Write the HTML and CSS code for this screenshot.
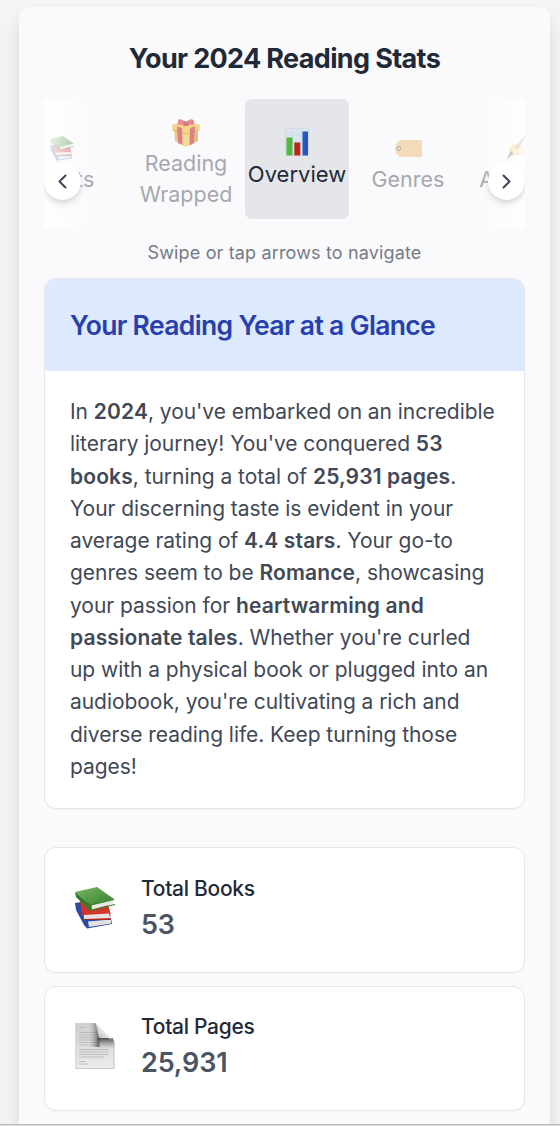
FILE: index.html
```html
<!DOCTYPE html>
<html lang="en">
<head>
<meta charset="UTF-8">
<title>Your 2024 Reading Stats</title>
<link rel="stylesheet" href="styles.css">
</head>
<body>
<svg class="defs" width="0" height="0">
	<defs>
		<linearGradient id="gGreen" x1="0" y1="0" x2="1" y2="1"><stop offset="0" stop-color="#79b565"/><stop offset="1" stop-color="#37812d"/></linearGradient>
		<linearGradient id="gGold" x1="0" y1="0" x2="1" y2="0"><stop offset="0" stop-color="#e0a52b"/><stop offset=".5" stop-color="#f4ce52"/><stop offset="1" stop-color="#cc972b"/></linearGradient>
		<linearGradient id="gPaper" x1="0" y1="0" x2="0" y2="1"><stop offset="0" stop-color="#cfcfcf"/><stop offset="1" stop-color="#ececec"/></linearGradient>
		<linearGradient id="gFold" x1="1" y1="0" x2="0" y2="1"><stop offset=".45" stop-color="#f4f4f4"/><stop offset=".7" stop-color="#cdcdcd"/><stop offset="1" stop-color="#666"/></linearGradient>
		<linearGradient id="gShade" x1="0" y1="0" x2="0" y2="1"><stop offset="0" stop-color="#444" stop-opacity=".95"/><stop offset="1" stop-color="#999" stop-opacity="0"/></linearGradient>
		<linearGradient id="gShade2" x1="1" y1="0" x2="0" y2="0"><stop offset="0" stop-color="#444" stop-opacity=".85"/><stop offset="1" stop-color="#999" stop-opacity="0"/></linearGradient>
		<symbol id="books" viewBox="0 0 40 42">
			<path d="M0 16 L6 15 L14 32 L36 31 L37 37 L12 41.500 L9 38 L1 23Z" fill="#2d48a5"/>
			<path d="M13 34.500 L36 32.500 L36 36.500 L14 40Z" fill="#e4e3e2"/>
			<path d="M5 14 L7 27 L9 32.500 L35 32 L35.500 26 L33 18Z" fill="#d2352a"/>
			<path d="M9 28 L34 26.500 L35 31 L9 32Z" fill="#e6e3e0"/>
			<path d="M8 32.500 H35.500" stroke="#a42820" stroke-width="1"/>
			<path d="M0 5 L22 0 L39 12 L16 18Z" fill="url(#gGreen)"/>
			<path d="M0 5 L16 18 L17 24 L13 22 L1 10Z" fill="#347c2b"/>
			<path d="M16.500 18 L38 12.500 L38 17 L17 22.500Z" fill="#e8e9e3"/>
			<path d="M16 18 L39 12.300 M16.500 23.300 L40 17.500" stroke="#377f2c" stroke-width="1.200"/>
		</symbol>
		<symbol id="gift" viewBox="0 0 28 28">
			<path d="M2 8 L14 12 L26 8 L26 22 L14 28 L3 22Z" fill="url(#gGold)"/>
			<path d="M0 6 L13 2 L28 6 L27.500 11 L14 15 L.5 11Z" fill="#efbd3e"/>
			<path d="M.5 11 L14 15 L27.500 11" fill="none" stroke="#b98525" stroke-width=".8"/>
			<path d="M5 7.500 L10 9 L10.500 26 L6 24Z M18 9 L23 7.500 L22 24 L17.500 26.500Z" fill="#ca303c"/>
			<path d="M14 4 C11 0 6 -1 6 2.500 C4 7 11 6 14 5 C17 6 24 7 22 2.500 C21 -1 17 0 14 4Z" fill="#df3f50"/>
			<path d="M12 2.500 L16 2.500 L17 7 L11 7Z" fill="#b82636"/>
		</symbol>
		<symbol id="chart" viewBox="0 0 24 28">
			<path d="M.5.500H23.500V27.500H.5Z" fill="#dde6f0" stroke="#d5dae1"/>
			<path d="M1 7H23M1 14H23M1 21H23M8 1V27M16 1V27" stroke="#cddae5" stroke-width=".6"/>
			<path d="M1.500 9.500h6v18h-6z" fill="#50b83c"/>
			<path d="M9.300 14.500h6v13h-6z" fill="#b9251f"/>
			<path d="M17.500 3.500h5.500v24h-5.500z" fill="#2558be"/>
		</symbol>
		<symbol id="tag" viewBox="0 0 27 17">
			<path d="M5 0H27V17H5L1 13Q-.5 8.500 1 4Z" fill="#f0c68c"/>
			<circle cx="3.800" cy="8.500" r="1.700" fill="#fff" stroke="#665746" stroke-width="1"/>
		</symbol>
		<symbol id="pen" viewBox="0 0 27 27">
			<path d="M2 14 Q7 7 13 9 L26 15 Q25 23 14 21 L3 22Z" fill="#f3bb3a"/>
			<path d="M0 26 L4 17 L8 18 Z" fill="#222"/>
			<path d="M7 15 L18 1 L20 0 L18 5 L10 17Z" fill="#555"/>
			<path d="M6 15 Q11 12 15 17 L11 20 L6 19Z" fill="#f7cd62"/>
		</symbol>
		<symbol id="page" viewBox="0 0 39 46">
			<path d="M0 0H20L39 19V46H0Z" fill="url(#gPaper)"/>
			<path d="M3.500 4.500h6M3.500 9.500h17M3.500 12h18M3.500 14.500h17M3.500 17h19M3.500 19.500h18M3.500 22h20M3.500 26.500h30M3.500 29h29M3.500 31.500h30M3.500 34h25M3.500 38.500h7M3.500 41h9" stroke="#b4b4b4" stroke-width=".8"/>
			<path d="M14 0H20L24 16V24H14Z" fill="url(#gShade2)"/>
			<path d="M22 15H37L39 19V26H22Z" fill="url(#gShade)"/>
			<path d="M20 0L39 19Q34 13 24 15Q25 5 20 0Z" fill="url(#gFold)"/>
			<path d="M.5 0V45.500H38.500V19" fill="none" stroke="#c4c4c4" stroke-width=".8"/>
		</symbol>
	</defs>
</svg>
<div class="panel">
	<h1>Your 2024 Reading Stats</h1>
	<div class="carousel">
		<div class="track">
			<div class="tab first"><span class="icon"><svg width="24" height="25"><use href="#books"/></svg></span><span>Habits</span></div>
			<div class="tab"><span class="icon"><svg width="28" height="28"><use href="#gift"/></svg></span><span>Reading</span><span>Wrapped</span></div>
			<div class="tab active"><span class="icon"><svg width="24" height="28"><use href="#chart"/></svg></span><span>Overview</span></div>
			<div class="tab"><span class="icon"><svg width="27" height="17"><use href="#tag"/></svg></span><span>Genres</span></div>
			<div class="tab"><span class="icon"><svg width="25" height="26"><use href="#pen"/></svg></span><span>Authors</span></div>
		</div>
		<div class="fade left"></div>
		<div class="fade right"></div>
		<button type="button" class="arrow prev"><svg width="9" height="15" viewBox="0 0 9 15"><path d="M7.500 1.500L1.500 7.500L7.500 13.500"/></svg></button>
		<button type="button" class="arrow next"><svg width="9" height="15" viewBox="0 0 9 15"><path d="M1.500 1.500L7.500 7.500L1.500 13.500"/></svg></button>
	</div>
	<p class="hint">Swipe or tap arrows to navigate</p>
	<div class="card">
		<h2>Your Reading Year at a Glance</h2>
		<p class="story">In <b>2024</b>, you've embarked on an incredible<br>
		literary journey! You've conquered <b>53<br>
		books</b>, turning a total of <b>25,931 pages</b>.<br>
		Your discerning taste is evident in your<br>
		average rating of <b>4.4 stars</b>. Your go-to<br>
		genres seem to be <b>Romance</b>, showcasing<br>
		your passion for <b>heartwarming and<br>
		passionate tales</b>. Whether you're curled<br>
		up with a physical book or plugged into an<br>
		audiobook, you're cultivating a rich and<br>
		diverse reading life. Keep turning those<br>
		pages!</p>
	</div>
	<div class="stats">
		<div class="stat">
			<svg width="40" height="42"><use href="#books"/></svg>
			<div><h3>Total Books</h3><p>53</p></div>
		</div>
		<div class="stat">
			<svg width="40" height="46"><use href="#page"/></svg>
			<div><h3>Total Pages</h3><p>25,931</p></div>
		</div>
		<div class="stat"></div>
	</div>
</div>
<div class="toolbar"></div>
</body>
</html>
```
FILE: styles.css
```css
* {margin:0; padding:0; box-sizing:border-box;}
html {height:100%; overflow:hidden;}
body {height:1126px; overflow:hidden; padding:7px 10px 0 19px; background:#f4f4f5; font-family:Inter, "Liberation Sans", sans-serif; color:#1f2937; position:relative;}
.defs {display:block; position:absolute;}

.panel {width:531px; height:1119px; overflow:hidden; padding:0 25px; background:#fafafc; border-radius:11px 11px 0 0; box-shadow:0 13px 20px rgba(0,0,0,.09), 0 5px 8px rgba(0,0,0,.03);}
h1 {height:92px; padding-top:34px; line-height:36px; font-size:27px; font-weight:650; letter-spacing:-.65px; text-align:center; white-space:nowrap;}

.carousel {height:129px; position:relative; overflow:hidden;}
.track {display:flex; gap:7px; height:129px; margin-left:-34px; width:600px;}
.tab {flex:none; width:104px; display:flex; flex-direction:column; align-items:center; justify-content:center; font-size:21.5px; line-height:31px; white-space:nowrap; color:#a6a8af;}
.tab.first {margin-right:13px;}
.tab .icon {height:31px; display:flex; align-items:center; justify-content:center; opacity:.6;}
.tab.active {height:120px; background:#e5e6ea; border-radius:7px; color:#1f2937; font-size:22px;}
.tab.active .icon {padding-bottom:3px; opacity:1;}
.fade {position:absolute; top:0; width:46px; height:129px;}
.fade.left {left:0; background:linear-gradient(to right, rgba(255,255,255,.85), rgba(255,255,255,0));}
.fade.right {right:0; background:linear-gradient(to left, rgba(255,255,255,.85), rgba(255,255,255,0));}
.arrow {position:absolute; top:64px; width:37px; height:37px; display:flex; align-items:center; justify-content:center; border:0; border-radius:50%; background:#fff; box-shadow:0 4px 7px rgba(0,0,0,.11), 0 2px 3px rgba(0,0,0,.05);}
.arrow.prev {left:0;}
.arrow.next {right:0;}
.arrow path {fill:none; stroke:#404754; stroke-width:2; stroke-linecap:round; stroke-linejoin:round;}

.hint {height:50px; padding-top:11px; line-height:28px; font-size:18px; letter-spacing:.15px; text-align:center; color:#747a86; white-space:nowrap;}

.card {height:531px; border:1.500px solid #e5e7ea; border-radius:12px; background:#fff; overflow:hidden; box-shadow:0 1px 1px rgba(0,0,0,.03);}
h2 {height:92px; padding-left:25px; line-height:92px; background:#dde9fd; color:#2740ac; font-size:26.5px; font-weight:600; letter-spacing:-.65px; white-space:nowrap;}
.story {padding:25px 0 0 25px; line-height:32.27px; font-size:21px; letter-spacing:-.05px; color:#414856; white-space:nowrap;}
.story b {font-weight:600; letter-spacing:.13px;}

.stats {display:flex; flex-direction:column; gap:13px; margin-top:38px;}
.stat {flex:none; height:125.500px; display:flex; align-items:center; gap:26px; padding:0 0 2px 30px; border:1.500px solid #e5e7ea; border-radius:12px; background:#fff; box-shadow:0 1px 1px rgba(0,0,0,.03);}
.stat > svg {margin-top:-2px;}
.stat h3 {line-height:32px; font-size:21px; font-weight:550; letter-spacing:-.3px;}
.stat p {line-height:40px; font-size:27px; font-weight:600; letter-spacing:-.15px; color:#4b5563;}

.toolbar {position:absolute; left:0; right:0; bottom:0; height:2px; background:#dedede; border-top:1px solid #b8b9bb;}
```
